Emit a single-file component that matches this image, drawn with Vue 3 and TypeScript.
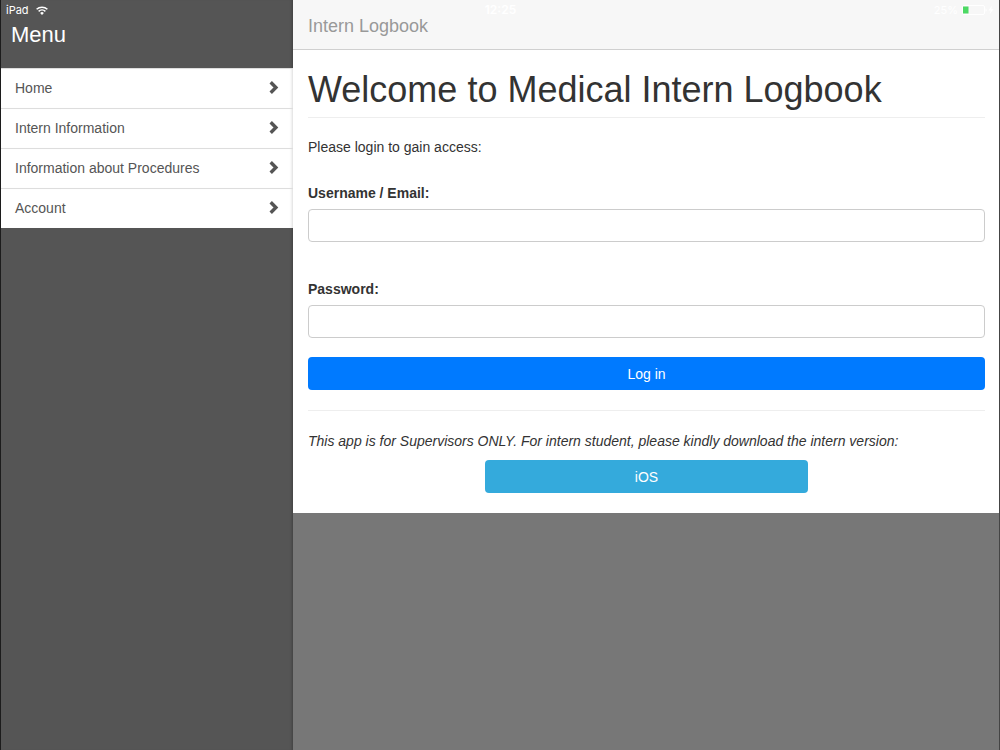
<script setup lang="ts">
import { ref } from 'vue'

const menuItems: string[] = ['Home', 'Intern Information', 'Information about Procedures', 'Account']
const username = ref('')
const password = ref('')
</script>

<template>
  <div class="screen">
    <div class="status">
      <div class="carrier">
        <span>iPad</span>
        <svg width="12" height="9" viewBox="0 0 12 9" aria-hidden="true">
          <g fill="none" stroke="#fff" stroke-width="1.5">
            <path d="M0.6 3.3a7.8 7.8 0 0 1 10.8 0" />
            <path d="M2.6 5.4a4.9 4.9 0 0 1 6.8 0" />
          </g>
          <path d="M6 9 4.1 7a2.8 2.8 0 0 1 3.8 0z" fill="#fff" />
        </svg>
      </div>
      <time class="clock">12:25</time>
      <div class="power">
        <span>25%</span>
        <svg width="33" height="10" viewBox="0 0 33 10" aria-hidden="true">
          <rect x="0.5" y="0.5" width="22" height="9" rx="1.5" fill="none" stroke="#fff" />
          <rect x="1" y="1.5" width="5.5" height="7" fill="#4cd964" />
          <path d="M23.5 3.2c1.6.4 1.6 3.2 0 3.6z" fill="#fff" />
          <path d="M30 0.5 26.5 5.5h2.2L27.5 9.5 31.5 4.3h-2.3z" fill="#fff" />
        </svg>
      </div>
    </div>

    <aside class="sidebar">
      <h2 class="menu-title">Menu</h2>
      <nav>
        <ul class="menu">
          <li v-for="item in menuItems" :key="item">
            <a href="#" @click.prevent>
              <span>{{ item }}</span>
              <svg width="10" height="13" viewBox="0 0 10 13" aria-hidden="true">
                <path d="M1.7 1.3 6.9 6.5 1.7 11.7" fill="none" stroke="#555" stroke-width="3.4" />
              </svg>
            </a>
          </li>
        </ul>
      </nav>
    </aside>

    <div class="page">
      <header class="navbar"><a href="#" @click.prevent>Intern Logbook</a></header>
      <main class="content">
        <h1>Welcome to Medical Intern Logbook</h1>
        <p class="intro">Please login to gain access:</p>
        <form @submit.prevent>
          <div class="field">
            <label for="username">Username / Email:</label>
            <input id="username" v-model="username" type="text" />
          </div>
          <div class="field">
            <label for="password">Password:</label>
            <input id="password" v-model="password" type="password" />
          </div>
          <button class="btn login" type="submit">Log in</button>
        </form>
        <hr />
        <p class="note">This app is for Supervisors ONLY. For intern student, please kindly download the intern version:</p>
        <button class="btn ios" type="button">iOS</button>
      </main>
    </div>
  </div>
</template>

<style>
body {
  background: #777;
}
</style>

<style scoped>
.screen,
.screen * {
  box-sizing: border-box;
}

.screen {
  position: relative;
  display: flex;
  min-height: 100vh;
  border-left: 1px solid #1c1c1c;
  background: #777;
  color: #333;
  font: 14px/20px "Liberation Sans", Arial, sans-serif;
}

.status {
  position: absolute;
  inset: 0 0 auto;
  display: grid;
  grid-template-columns: 1fr auto 1fr;
  align-items: center;
  height: 20px;
  padding: 0 5px;
  color: #fff;
  font-family: Inter, "Liberation Sans", sans-serif;
  font-size: 11px;
}

.carrier,
.power {
  display: flex;
  align-items: center;
  gap: 7px;
}

.power {
  justify-content: flex-end;
  gap: 4px;
}

.clock {
  font-size: 12px;
  font-weight: 600;
}

.sidebar {
  flex: 0 0 292px;
  background: #555;
  box-shadow: inset -3px 0 3px -2px rgba(0, 0, 0, 0.25);
}

.menu-title {
  height: 68px;
  margin: 0;
  padding: 22px 10px 0;
  color: #fff;
  font-size: 22px;
  font-weight: 400;
  line-height: 26px;
}

.menu {
  margin: 0;
  padding: 0;
  list-style: none;
}

.menu a {
  display: flex;
  align-items: center;
  justify-content: space-between;
  height: 40px;
  padding: 0 14px 2px;
  border-top: 1px solid #ddd;
  background: #fff;
  box-shadow: inset -3px 0 3px -2px rgba(0, 0, 0, 0.15);
  color: #555;
  text-decoration: none;
}

.page {
  flex: 1;
  min-width: 0;
  border-right: 1px solid #444;
}

.navbar {
  height: 50px;
  padding: 16px 15px 0;
  border-bottom: 1px solid #d0d0d0;
  background: #f7f7f7;
  font-size: 18px;
}

.navbar a {
  color: #999;
  text-decoration: none;
}

.content {
  padding: 20px 14px 20px 15px;
  background: #fff;
}

h1 {
  margin: 0 0 19px;
  padding-bottom: 8px;
  border-bottom: 1px solid #eee;
  font-size: 36px;
  font-weight: 400;
  line-height: 39px;
}

.intro {
  margin: 0 0 26px;
}

.field {
  display: flex;
  flex-direction: column;
  gap: 6px;
  margin-bottom: 37px;
}

.field + .field {
  margin-bottom: 19px;
}

label {
  font-weight: 700;
}

input {
  width: 100%;
  height: 33px;
  padding: 6px 12px;
  border: 1px solid #ccc;
  border-radius: 4px;
  background: #fff;
  color: #555;
  font: inherit;
}

.btn {
  display: block;
  width: 100%;
  height: 33px;
  padding: 0;
  border: 0;
  border-radius: 4px;
  color: #fff;
  font: inherit;
}

.login {
  background: #007aff;
}

hr {
  margin: 20px 0;
  border: 0;
  border-top: 1px solid #eee;
}

.note {
  margin: 0 0 9px;
  font-style: italic;
}

.ios {
  width: calc(50% - 15px);
  margin: 0 auto;
  background: #34aadc;
}
</style>
